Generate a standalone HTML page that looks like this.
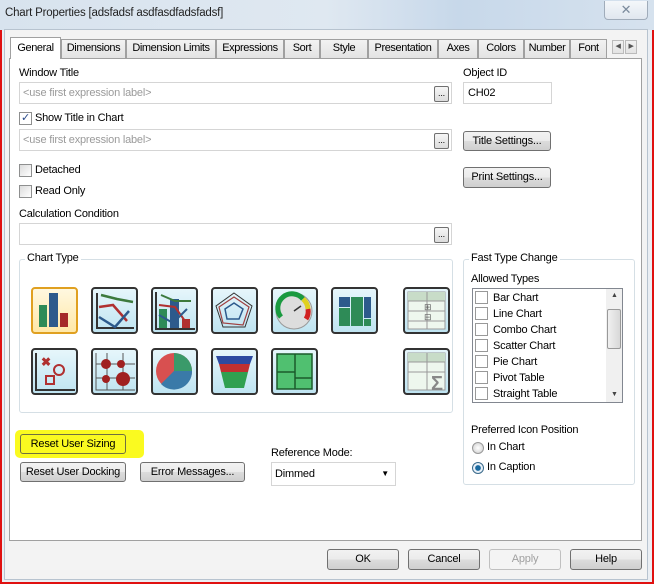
<!DOCTYPE html>
<html><head><meta charset="utf-8"><style>
*{box-sizing:border-box;margin:0;padding:0}
body{width:657px;height:585px;background:#fff;position:relative;overflow:hidden;font-family:"Liberation Sans",sans-serif;font-size:11px;color:#000;letter-spacing:-0.2px}
.a{position:absolute}
.win{left:0;top:0;width:654px;height:584px;border:2px solid #e01010;background:#eaeef3}
.tb{left:0;top:0;width:654px;height:30px;background:linear-gradient(90deg,#d8e3ee 0%,#dfe8f1 50%,#c7d8ea 70%,#d6e2ee 100%)}
.body{left:4px;top:29px;width:644px;height:551px;background:#f3f3f3;border:1px solid #b7c3cf}
.tab{position:absolute;top:39px;height:19px;border:1px solid #a0a0a0;border-bottom:none;background:linear-gradient(#f2f2f2,#e3e3e3);font-size:11px;text-align:center;line-height:17px;white-space:nowrap;letter-spacing:-0.4px}
.tab.sel{top:37px;height:22px;background:#fff;z-index:2;line-height:21px}
.panel{left:9px;top:58px;width:633px;height:483px;background:#fff;border:1px solid #a0a0a0}
.lbl{position:absolute;font-size:11px;white-space:nowrap}
.inp{position:absolute;border:1px solid #d5d5d5;background:#fff;font-size:11px;color:#9a9a9a;padding:4px 3px;white-space:nowrap}
.dots{position:absolute;width:15px;height:16px;border:1px solid #707070;border-radius:2px;background:linear-gradient(#f6f6f6,#dcdcdc);font-size:9px;text-align:center;line-height:12px}
.btn{position:absolute;border:1px solid #707070;border-radius:3px;background:linear-gradient(#f2f2f2 0%,#ebebeb 50%,#dcdcdc 51%,#cfcfcf 100%);font-size:11px;text-align:center;white-space:nowrap}
.cb{position:absolute;width:13px;height:13px;border:1px solid #8e8f8f;background:linear-gradient(135deg,#dcdcdc,#fff)}
.grp{position:absolute;border:1px solid #d5dfe5;border-radius:3px}
.gt{position:absolute;background:#fff;padding:0 2px;font-size:11px}
.ic{position:absolute;width:47px;height:47px;border:2px solid #333;border-radius:4px;background:linear-gradient(#e6f6fb,#bfe4f1)}
.li{position:absolute;left:2px;font-size:11px}
.li i{display:inline-block;width:13px;height:13px;border:1px solid #999;vertical-align:-3px;margin-right:5px;background:#fff}
</style></head><body>
<div class="a win"></div>
<div class="a tb"></div>
<div class="lbl" style="left:5px;top:7px;font-size:11.5px;color:#222">Chart Properties [adsfadsf asdfasdfadsfadsf]</div>
<div class="a" style="left:604px;top:1px;width:44px;height:19px;border:1px solid #a0acba;border-top:none;border-radius:0 0 4px 4px;background:linear-gradient(#f4f7fa,#e0e7ef);text-align:center;font-size:13px;color:#7a8a9c;line-height:18px">✕</div>
<div class="a body"></div>
<div class="a panel"></div>
<div class="tab sel" style="left:10px;width:51px">General</div>
<div class="tab" style="left:61px;width:65px">Dimensions</div>
<div class="tab" style="left:126px;width:90px">Dimension Limits</div>
<div class="tab" style="left:216px;width:68px">Expressions</div>
<div class="tab" style="left:284px;width:36px">Sort</div>
<div class="tab" style="left:320px;width:48px">Style</div>
<div class="tab" style="left:368px;width:70px">Presentation</div>
<div class="tab" style="left:438px;width:40px">Axes</div>
<div class="tab" style="left:478px;width:46px">Colors</div>
<div class="tab" style="left:524px;width:46px">Number</div>
<div class="tab" style="left:570px;width:37px">Font</div>
<div class="tab" style="left:612px;top:40px;width:12px;height:14px;border:1px solid #bbb;font-size:7px;line-height:12px;color:#555">◀</div>
<div class="tab" style="left:625px;top:40px;width:12px;height:14px;border:1px solid #bbb;font-size:7px;line-height:12px;color:#555">▶</div>

<div class="lbl" style="left:19px;top:67px">Window Title</div>
<div class="inp" style="left:19px;top:82px;width:433px;height:22px">&lt;use first expression label&gt;</div>
<div class="dots" style="left:434px;top:86px">...</div>
<div class="lbl" style="left:463px;top:67px">Object ID</div>
<div class="inp" style="left:463px;top:82px;width:89px;height:22px;color:#000;padding-left:4px">CH02</div>

<div class="cb" style="left:19px;top:112px;background:#fff;font-size:11px;line-height:10px;color:#2a4a8a;text-align:center">✓</div>
<div class="lbl" style="left:35px;top:112px">Show Title in Chart</div>
<div class="inp" style="left:19px;top:129px;width:433px;height:22px">&lt;use first expression label&gt;</div>
<div class="dots" style="left:434px;top:133px">...</div>
<div class="btn" style="left:463px;top:131px;width:88px;height:20px;line-height:18px">Title Settings...</div>

<div class="cb" style="left:19px;top:164px"></div>
<div class="lbl" style="left:35px;top:164px">Detached</div>
<div class="cb" style="left:19px;top:185px"></div>
<div class="lbl" style="left:35px;top:185px">Read Only</div>
<div class="btn" style="left:463px;top:167px;width:88px;height:21px;line-height:19px">Print Settings...</div>

<div class="lbl" style="left:19px;top:208px">Calculation Condition</div>
<div class="inp" style="left:19px;top:223px;width:433px;height:22px"></div>
<div class="dots" style="left:434px;top:227px">...</div>

<div class="grp" style="left:19px;top:259px;width:434px;height:154px"></div>
<div class="gt" style="left:25px;top:252px">Chart Type</div>
<div class="grp" style="left:463px;top:259px;width:172px;height:226px"></div>
<div class="gt" style="left:469px;top:252px">Fast Type Change</div>

<div class="ic" style="left:31px;top:287px;border-color:#e0a020;background:linear-gradient(#fff8e0,#ffe8a8)"><svg width="43" height="43"><rect x="6" y="16" width="8" height="22" fill="#2e8b57"/><rect x="16" y="4" width="9" height="34" fill="#2d5a8c"/><rect x="27" y="24" width="8" height="14" fill="#a52a2a"/></svg></div>
<div class="ic" style="left:91px;top:287px"><svg width="43" height="43"><path d="M4 4V39H41" stroke="#333" stroke-width="2" fill="none"/><path d="M8 6L24 10L40 13" stroke="#3d7a3d" stroke-width="2.5" fill="none"/><path d="M6 18L20 16L34 32" stroke="#b03030" stroke-width="2.5" fill="none"/><path d="M6 28L22 38L36 22" stroke="#2d5a8c" stroke-width="2.5" fill="none"/></svg></div>
<div class="ic" style="left:151px;top:287px"><svg width="43" height="43"><path d="M3 3V40H42" stroke="#333" stroke-width="2" fill="none"/><rect x="6" y="20" width="8" height="19" fill="#2e8b57"/><rect x="17" y="10" width="9" height="29" fill="#2d5a8c"/><rect x="29" y="30" width="8" height="9" fill="#b03030"/><path d="M8 6L22 12L38 12" stroke="#3d7a3d" stroke-width="2" fill="none"/><path d="M6 16L22 18L32 32" stroke="#b03030" stroke-width="2" fill="none"/><path d="M6 26L20 34L34 20" stroke="#2d5a8c" stroke-width="2" fill="none"/></svg></div>
<div class="ic" style="left:211px;top:287px"><svg width="43" height="43"><path d="M21 4L39 17L32 38H10L3 17Z" stroke="#333" fill="none"/><path d="M21 8L36 18L30 36L10 34L6 18Z" stroke="#a04040" stroke-width="1.2" fill="none"/><path d="M21 14L30 20L26 30L14 30L12 20Z" stroke="#2d5a8c" stroke-width="1.5" fill="none"/></svg></div>
<div class="ic" style="left:271px;top:287px"><svg width="43" height="43"><circle cx="21" cy="22" r="18" fill="#ddd" stroke="#999"/><path d="M8 28A14 14 0 0 1 30 10" stroke="#1a9a40" stroke-width="5" fill="none"/><path d="M30 10A14 14 0 0 1 35 20" stroke="#e0d020" stroke-width="5" fill="none"/><path d="M35 20A14 14 0 0 1 33 30" stroke="#d02020" stroke-width="5" fill="none"/><path d="M21 22L28 17" stroke="#333" stroke-width="1.5"/></svg></div>
<div class="ic" style="left:331px;top:287px"><svg width="43" height="43"><rect x="6" y="8" width="11" height="10" fill="#2d5a8c"/><rect x="6" y="19" width="11" height="18" fill="#2e8b57"/><rect x="18" y="8" width="12" height="29" fill="#2e8b57"/><rect x="31" y="8" width="7" height="21" fill="#2d5a8c"/><rect x="31" y="30" width="7" height="7" fill="#2e8b57"/></svg></div>
<div class="ic" style="left:403px;top:287px"><svg width="43" height="43"><rect x="3" y="3" width="37" height="37" fill="#eef7ee" stroke="#999"/><rect x="3" y="3" width="37" height="9" fill="#c8dcc8"/><path d="M3 12H40M3 22H40M3 32H40M22 3V40" stroke="#999"/><text x="19" y="21" font-size="9" fill="#666">⊞</text><text x="19" y="31" font-size="9" fill="#666">⊟</text></svg></div>
<div class="ic" style="left:31px;top:348px"><svg width="43" height="43"><path d="M3 3V40H42" stroke="#333" stroke-width="2" fill="none"/><text x="8" y="16" font-size="12" font-weight="bold" fill="#b03030">✖</text><circle cx="26" cy="20" r="5" stroke="#b03030" stroke-width="2" fill="none"/><rect x="13" y="26" width="8" height="8" stroke="#b03030" stroke-width="2" fill="none"/></svg></div>
<div class="ic" style="left:91px;top:348px"><svg width="43" height="43"><path d="M3 3V40H42M3 14H42M3 28H42M14 3V40M30 3V40" stroke="#555" stroke-width="1" fill="none"/><circle cx="13" cy="14" r="5" fill="#a02020"/><circle cx="28" cy="14" r="4" fill="#a02020"/><circle cx="13" cy="29" r="4" fill="#a02020"/><circle cx="30" cy="29" r="7" fill="#a02020"/></svg></div>
<div class="ic" style="left:151px;top:348px"><svg width="43" height="43"><circle cx="21" cy="21" r="18" fill="#d85050"/><path d="M21 21V3A18 18 0 0 1 39 21Z" fill="#3a9a6a"/><path d="M21 21H39A18 18 0 0 1 8 34Z" fill="#3a7aa8"/></svg></div>
<div class="ic" style="left:211px;top:348px"><svg width="43" height="43"><path d="M3 6H40L37 14H6Z" fill="#2d4aa0"/><path d="M6 14H37L35 22H8Z" fill="#c03030"/><path d="M8 22H35L31 38H12Z" fill="#30a050"/></svg></div>
<div class="ic" style="left:271px;top:348px"><svg width="43" height="43"><rect x="4" y="4" width="35" height="35" fill="#50c070" stroke="#1a5a2a" stroke-width="1.5"/><path d="M4 22H22M22 4V39M22 28H39" stroke="#1a5a2a" stroke-width="1.5"/></svg></div>
<div class="ic" style="left:403px;top:348px"><svg width="43" height="43"><rect x="3" y="3" width="37" height="37" fill="#eef7ee" stroke="#999"/><rect x="3" y="3" width="37" height="9" fill="#c8dcc8"/><path d="M3 12H40M3 22H40M22 3V40" stroke="#999"/><text x="26" y="40" font-size="20" font-weight="bold" fill="#888">Σ</text></svg></div>

<div class="lbl" style="left:471px;top:273px">Allowed Types</div>
<div class="a" style="left:472px;top:288px;width:151px;height:115px;border:1px solid #828790;background:#fff;overflow:hidden">
<div class="li" style="top:2px"><i></i>Bar Chart</div>
<div class="li" style="top:18px"><i></i>Line Chart</div>
<div class="li" style="top:34px"><i></i>Combo Chart</div>
<div class="li" style="top:50px"><i></i>Scatter Chart</div>
<div class="li" style="top:66px"><i></i>Pie Chart</div>
<div class="li" style="top:82px"><i></i>Pivot Table</div>
<div class="li" style="top:98px"><i></i>Straight Table</div>
<div class="a" style="left:133px;top:0;width:17px;height:113px;background:#f0f0f0"></div>
<div class="a" style="left:138px;top:3px;font-size:7px;color:#444">▲</div>
<div class="a" style="left:138px;top:102px;font-size:7px;color:#444">▼</div>
<div class="a" style="left:134px;top:20px;width:14px;height:40px;border:1px solid #999;border-radius:2px;background:linear-gradient(90deg,#f0f0f0,#d8d8d8)"></div>
</div>
<div class="lbl" style="left:471px;top:424px">Preferred Icon Position</div>
<div class="a" style="left:472px;top:442px;width:12px;height:12px;border:1px solid #999;border-radius:50%;background:radial-gradient(#fff,#ccc)"></div>
<div class="lbl" style="left:487px;top:441px">In Chart</div>
<div class="a" style="left:472px;top:462px;width:12px;height:12px;border:1px solid #3a6a8a;border-radius:50%;background:radial-gradient(#1a6aa0 35%,#e8f0f8 45%)"></div>
<div class="lbl" style="left:487px;top:461px">In Caption</div>

<div class="a" style="left:15px;top:430px;width:129px;height:28px;background:#fafa20;border-radius:5px"></div>
<div class="btn" style="left:20px;top:434px;width:106px;height:20px;line-height:18px;background:transparent;border-color:#707040">Reset User Sizing</div>
<div class="btn" style="left:20px;top:462px;width:106px;height:20px;line-height:18px">Reset User Docking</div>
<div class="btn" style="left:140px;top:462px;width:105px;height:20px;line-height:18px">Error Messages...</div>
<div class="lbl" style="left:271px;top:447px">Reference Mode:</div>
<div class="inp" style="left:271px;top:462px;width:125px;height:24px;color:#000;padding:5px 3px">Dimmed<span style="position:absolute;right:6px;top:6px;font-size:8px">▼</span></div>

<div class="btn" style="left:327px;top:549px;width:72px;height:21px;line-height:19px">OK</div>
<div class="btn" style="left:408px;top:549px;width:72px;height:21px;line-height:19px">Cancel</div>
<div class="btn" style="left:489px;top:549px;width:72px;height:21px;line-height:19px;color:#a0a0a0;border-color:#c0c0c0;background:#f4f4f4">Apply</div>
<div class="btn" style="left:570px;top:549px;width:72px;height:21px;line-height:19px">Help</div>
</body></html>
